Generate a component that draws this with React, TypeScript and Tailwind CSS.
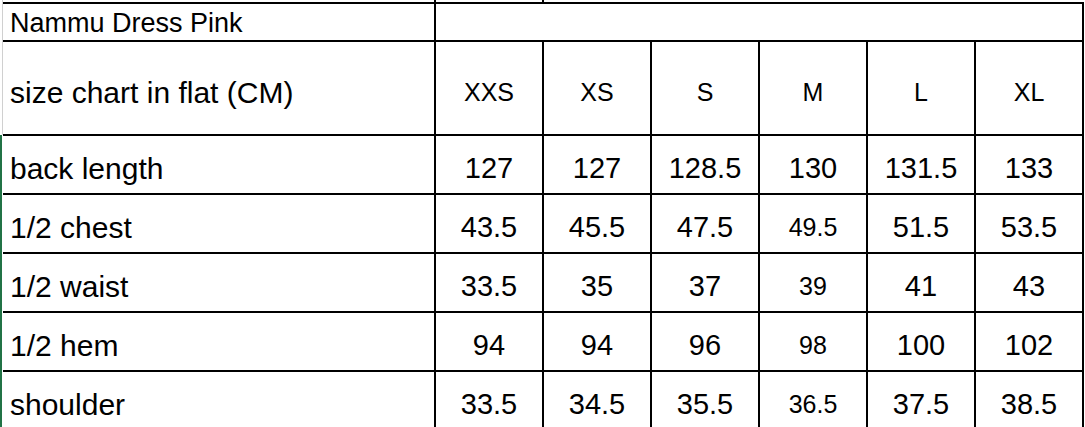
import React from "react";

const sizes = ["XXS", "XS", "S", "M", "L", "XL"];
const rows: { label: string; values: string[] }[] = [
  { label: "back length", values: ["127", "127", "128.5", "130", "131.5", "133"] },
  { label: "1/2 chest", values: ["43.5", "45.5", "47.5", "49.5", "51.5", "53.5"] },
  { label: "1/2 waist", values: ["33.5", "35", "37", "39", "41", "43"] },
  { label: "1/2 hem", values: ["94", "94", "96", "98", "100", "102"] },
  { label: "shoulder", values: ["33.5", "34.5", "35.5", "36.5", "37.5", "38.5"] },
];

const small = new Set(["49.5", "39", "98", "36.5"]);

export default function App() {
  return (
    <div className="w-[1085px] h-[427px] overflow-hidden bg-white flex items-start font-['Liberation_Sans',Arial,sans-serif] text-black">
      <div className="w-[3px] h-[427px] shrink-0 flex flex-col">
        <div className="h-[135px] shrink-0 border-r border-[#d0d0d0]" />
        <div className="flex-1 w-[2px] bg-[#217346]" />
      </div>
      <div className="flex flex-col shrink-0">
        <div className="h-[2px] shrink-0 flex">
          <div className="w-[433px] border-r-2 border-black" />
          <div className="w-[108px] border-r-2 border-black" />
        </div>
        <div className="shrink-0 grid grid-cols-[433px_repeat(6,108px)] grid-rows-[38px_94px_repeat(5,59px)] border-t-2 border-black">
          <div className="border-r-2 border-b-2 border-black flex items-center pl-[7px] pt-[2px] text-[27px] leading-none">
            Nammu Dress Pink
          </div>
          <div className="col-span-6 border-r-2 border-b-2 border-black" />
          <div className="border-r-2 border-b-2 border-black flex items-center pl-[7px] pt-[8px] text-[30px]">
            size chart in flat (CM)
          </div>
          {sizes.map((s) => (
            <div
              key={s}
              className="border-r-2 border-b-2 border-black flex items-center justify-center pt-[9px] text-[25px]"
            >
              {s}
            </div>
          ))}
          {rows.map((r) => (
            <React.Fragment key={r.label}>
              <div className="border-r-2 border-b-2 border-black flex items-center pl-[7px] pt-[8px] text-[30px]">
                {r.label}
              </div>
              {r.values.map((v, i) => (
                <div
                  key={i}
                  className={
                    i === 3 && small.has(v)
                      ? "border-r-2 border-b-2 border-black flex items-center justify-center pt-[8px] text-[25px]"
                      : "border-r-2 border-b-2 border-black flex items-center justify-center pt-[8px] text-[29px]"
                  }
                >
                  {v}
                </div>
              ))}
            </React.Fragment>
          ))}
        </div>
      </div>
    </div>
  );
}
